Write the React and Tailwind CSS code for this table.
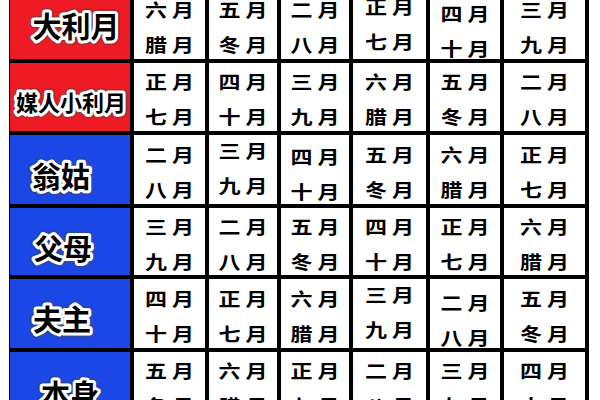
import React from "react";

const rows = [
  {
    label: "大利月",
    bg: "bg-[#ee1b24]",
    pos: { x: 66, y: 34, size: 29 },
    cells: [["六月", "腊月"], ["五月", "冬月"], ["二月", "八月"], ["正月", "七月", -3], ["四月", "十月", 4], ["三月", "九月"]],
  },
  {
    label: "媒人小利月",
    bg: "bg-[#ee1b24]",
    pos: { x: 61, y: 38, size: 22 },
    cells: [["正月", "七月"], ["四月", "十月"], ["三月", "九月"], ["六月", "腊月"], ["五月", "冬月"], ["二月", "八月"]],
  },
  {
    label: "翁姑",
    bg: "bg-[#1a47e6]",
    pos: { x: 51, y: 40, size: 29 },
    cells: [["二月", "八月"], ["三月", "九月", -4], ["四月", "十月", 2], ["五月", "冬月"], ["六月", "腊月"], ["正月", "七月"]],
  },
  {
    label: "父母",
    bg: "bg-[#1a47e6]",
    pos: { x: 53, y: 39, size: 29 },
    cells: [["三月", "九月"], ["二月", "八月"], ["五月", "冬月"], ["四月", "十月"], ["正月", "七月"], ["六月", "腊月"]],
  },
  {
    label: "夫主",
    bg: "bg-[#1a47e6]",
    pos: { x: 52, y: 39, size: 29 },
    cells: [["四月", "十月"], ["正月", "七月"], ["六月", "腊月"], ["三月", "九月", -4], ["二月", "八月", 4], ["五月", "冬月"]],
  },
  {
    label: "本身",
    bg: "bg-[#1a47e6]",
    pos: { x: 60, y: 41, size: 29 },
    cells: [["五月", "冬月"], ["六月", "腊月"], ["正月", "七月"], ["二月", "八月"], ["三月", "九月"], ["四月", "十月"]],
  },
];

const font = "'Noto Sans CJK SC', 'Noto Sans', sans-serif";

const Cell = ({ top, bottom, dy = 0 }) => (
  <div className="bg-white flex flex-col items-center justify-center overflow-hidden">
    <div style={{ transform: `translateY(${dy}px)` }} className="flex flex-col items-center pt-[2px]">
      <span className="block text-[22px] leading-[35px] font-bold tracking-[5px] pl-[5px] text-black scale-y-[0.85]">{top}</span>
      <span className="block text-[22px] leading-[35px] font-bold tracking-[5px] pl-[5px] text-black scale-y-[0.85]">{bottom}</span>
    </div>
  </div>
);

// black glyphs with a white halo (svg text so the stroke sits behind the fill)
const Label = ({ text, pos }) => (
  <svg width="120" height="68" viewBox="0 0 120 68" className="block">
    <text
      x={pos.x}
      y={pos.y}
      textAnchor="middle"
      dominantBaseline="central"
      fontFamily={font}
      fontWeight="700"
      fontSize={pos.size}
      fill="none"
      stroke="#444"
      strokeOpacity="0.45"
      strokeWidth="9"
      strokeLinejoin="round"
    >
      {text}
    </text>
    <text
      x={pos.x}
      y={pos.y}
      textAnchor="middle"
      dominantBaseline="central"
      fontFamily={font}
      fontWeight="700"
      fontSize={pos.size}
      fill="#000"
      stroke="#fff"
      strokeWidth="6"
      strokeLinejoin="round"
      paintOrder="stroke"
    >
      {text}
    </text>
  </svg>
);

const App = () => {
  return (
    <div className="w-[600px] h-[400px] overflow-hidden bg-white font-['Noto_Sans_CJK_SC','Noto_Sans',sans-serif]">
      <div className="ml-[9px] -mt-[13px] w-fit bg-black pl-[1px] pt-[4px] pr-[4px] grid grid-cols-[120px_71px_68px_68px_73px_70px_81px] grid-rows-[68px_68px_69px_67px_69px_68px] gap-[4px]">
        {rows.map((row) => (
          <React.Fragment key={row.label}>
            <div className={`${row.bg} overflow-hidden`}>
              <Label text={row.label} pos={row.pos} />
            </div>
            {row.cells.map((c, i) => (
              <Cell key={i} top={c[0]} bottom={c[1]} dy={c[2] || 0} />
            ))}
          </React.Fragment>
        ))}
      </div>
    </div>
  );
};

export default App;
